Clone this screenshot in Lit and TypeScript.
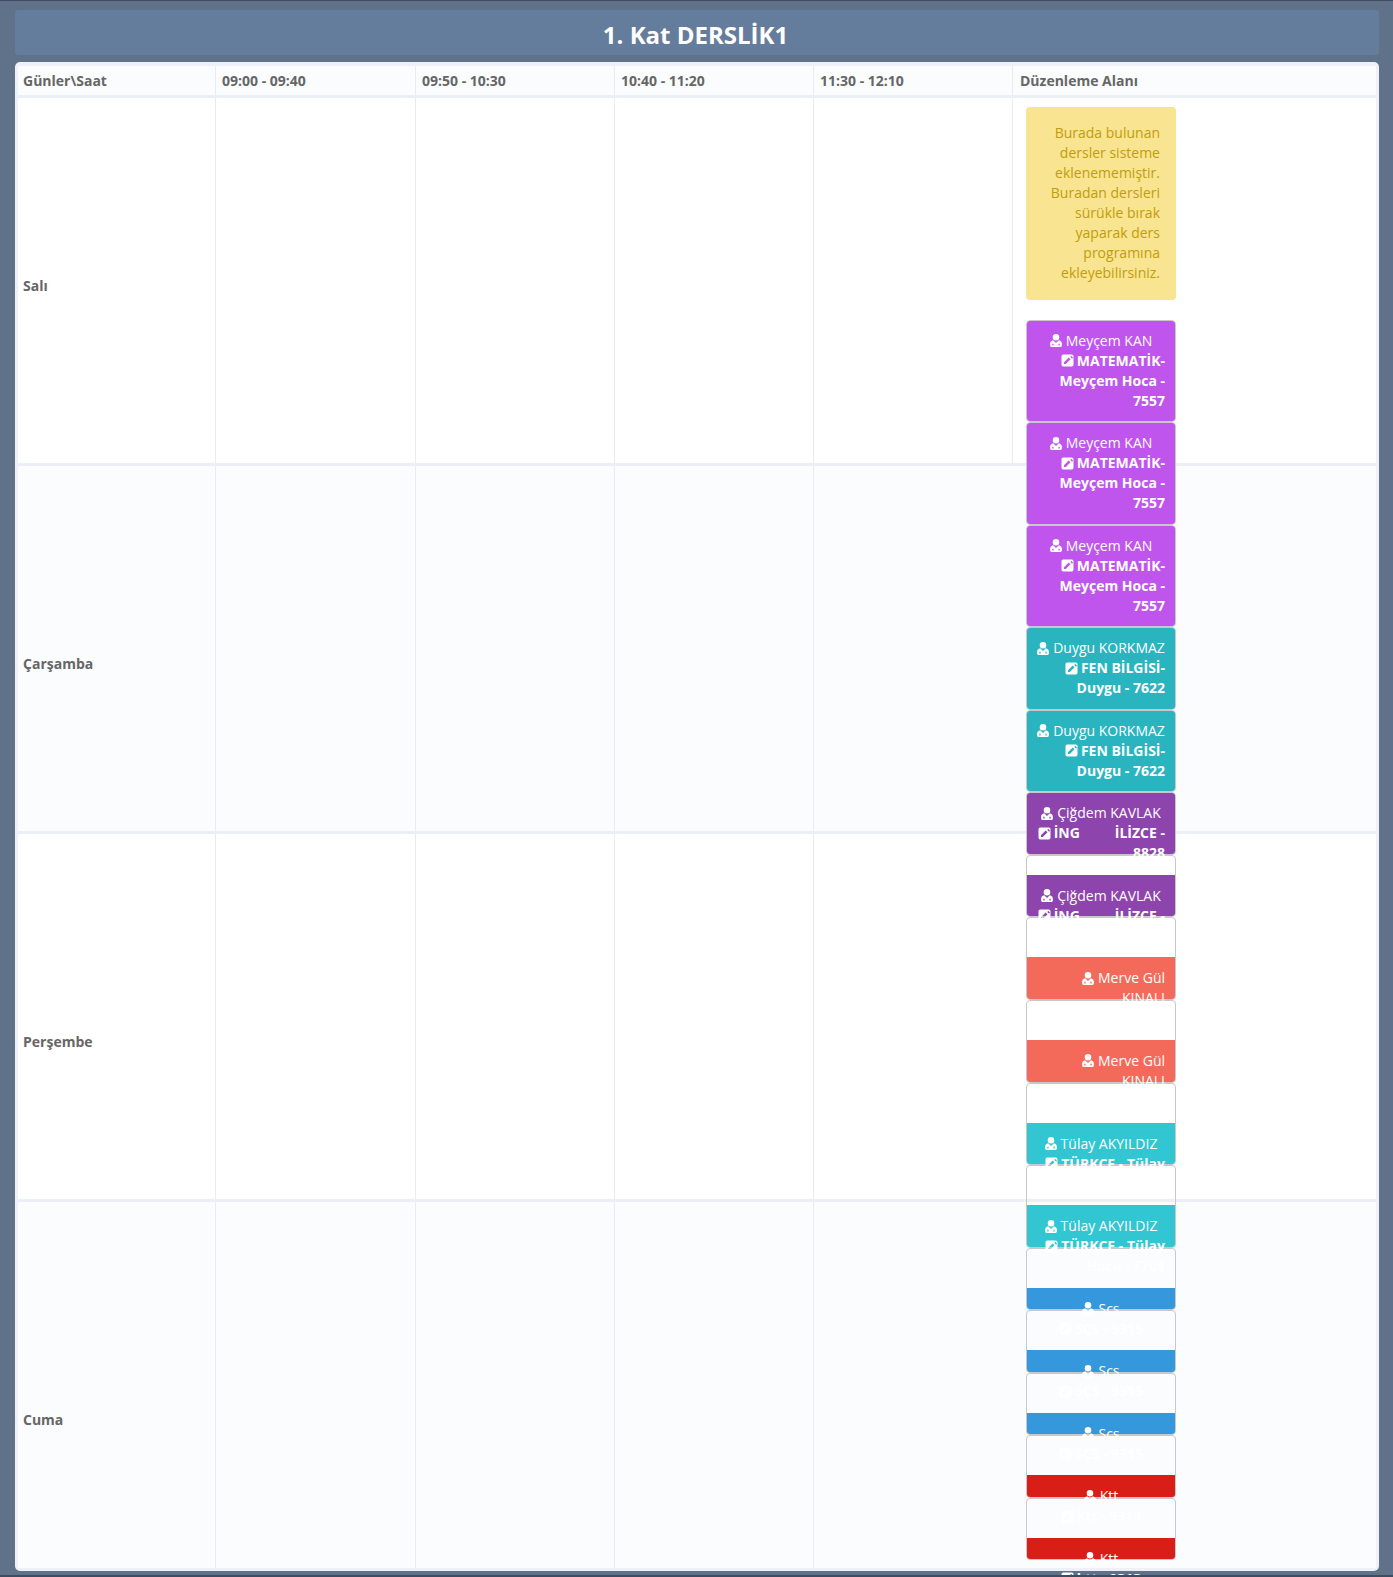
import { LitElement, html, css, svg } from "lit";
import { customElement } from "lit/decorators.js";

interface Card {
  name: string;
  code: string;
  color: string;
  height: number;
  gap: number;
  nameRight?: boolean;
  codeCenter?: boolean;
}

const MAT = { name: "Meyçem KAN", code: "MATEMATİK-Meyçem Hoca - 7557", color: "#bf55ec", height: 102.6, gap: 0 };
const FEN = { name: "Duygu KORKMAZ", code: "FEN BİLGİSİ-Duygu - 7622", color: "#2ab4c0", height: 82.4, gap: 0 };
const ING = { name: "Çiğdem KAVLAK", code: "İNG|İLİZCE - 8828", color: "#8e44ad", height: 62.5 };
const MER = { name: "Merve Gül KINALI", code: "", color: "#f36a5a", height: 82.8, gap: 39, nameRight: true };
const TUR = { name: "Tülay AKYILDIZ", code: "TÜRKÇE - Tülay Hoca - 7708", color: "#32c5d2", height: 82.5, gap: 39 };
const SCS = { name: "Scs", code: "SÇS - 9315", color: "#3598dc", height: 62.5, gap: 39, codeCenter: true };
const KTT = { name: "Ktt", code: "ktt - 9313", color: "#d91e18", height: 62.5, gap: 39, codeCenter: true };

const CARDS: Card[] = [
  MAT, MAT, MAT, FEN, FEN,
  { ...ING, gap: 0 }, { ...ING, gap: 19 },
  MER, MER, TUR, TUR, SCS, SCS, SCS, KTT, KTT,
];

const HOURS = ["09:00 - 09:40", "09:50 - 10:30", "10:40 - 11:20", "11:30 - 12:10"];
const DAYS = ["Salı", "Çarşamba", "Perşembe", "Cuma"];

const userIcon = svg`<path fill="currentColor" fill-rule="evenodd" d="M6 0a3.300 3.300 0 1 1 0 6.600A3.300 3.300 0 0 1 6 0zM3.200 6.300 6 9l2.800-2.700c1.900.3 3.100 1.700 3.100 3.500v1.700c0 .9-.7 1.500-1.600 1.500H1.700C.8 13 .1 12.400.1 11.500V9.800c0-1.800 1.200-3.200 3.100-3.500zM2.300 9.700v1.900h1.300V9.700zm6.100 0v1.900h1.300V9.700z"/>`;
const editIcon = svg`<path fill="currentColor" fill-rule="evenodd" d="M2.200.5h8.600A1.700 1.700 0 0 1 12.500 2.200v8.600a1.700 1.700 0 0 1-1.700 1.700H2.200A1.700 1.700 0 0 1 .5 10.800V2.200A1.700 1.700 0 0 1 2.200.5zM3 8.200V10h1.800l4.700-4.700-1.800-1.800zM9.300 2.900l1.800 1.800.6-.6a.6.600 0 0 0 0-.8l-1-1a.6.600 0 0 0-.8 0z"/>`;

@customElement("app-root")
export class AppRoot extends LitElement {
  static styles = css`
    :host {
      display: block;
      box-sizing: border-box;
      height: 1577px;
      overflow: hidden;
      padding: 9px 14px 0 15px;
      background: #5f7289;
      border-top: 1px solid #3f4c5f;
      border-bottom: 2px solid #3f4c5f;
      font-family: "Open Sans", "Noto Sans", sans-serif;
      font-size: 14px;
      line-height: 20px;
      color: #666;
    }
    .title {
      box-sizing: border-box;
      height: 45px;
      display: flex;
      align-items: center;
      justify-content: center;
      padding: 4px 3px 0 0;
      background: #657d9c;
      border-radius: 3px;
      color: #fff;
      font-size: 24px;
      font-weight: 700;
    }
    .table {
      margin-top: 7px;
      border: 3px solid #eef1f7;
      border-top-width: 4px;
      border-radius: 5px;
      background: #fff;
    }
    .row {
      display: grid;
      grid-template-columns: 197px 200px 199px 199px 199px 1fr;
      grid-template-rows: minmax(0, 1fr);
      box-sizing: border-box;
      height: 368px;
      border-bottom: 3px solid #eceff5;
    }
    .row.head {
      height: 32px;
      background: #fbfcfe;
      font-weight: 700;
    }
    .row.even {
      background: #fbfcfe;
    }
    .row.last {
      height: 366px;
      border-bottom: 0;
    }
    .head .cell {
      padding: 5px 6px;
    }
    .head .cell:first-child {
      padding-left: 5px;
    }
    .head .cell:last-child {
      padding-left: 7px;
    }
    .cell {
      box-sizing: border-box;
      min-width: 0;
    }
    .cell + .cell {
      border-left: 1px solid #e8ebf1;
    }
    .day {
      padding-left: 5px;
      font-weight: 700;
    }
    .row.body:not(.first) .cell:last-child {
      border-left: 0;
    }
    .edit {
      position: relative;
      z-index: 2;
      padding: 9px 0 0 13px;
    }
    .note {
      box-sizing: border-box;
      width: 150px;
      height: 193px;
      margin-bottom: 19.5px;
      padding: 16px;
      border-radius: 4px;
      background: #f9e491;
      color: #c29d0b;
      text-align: right;
    }
    .card {
      box-sizing: border-box;
      width: 150px;
      display: flex;
      flex-direction: column;
      border: 1px solid #c8c8cc;
      border-radius: 4px;
      color: #fff;
    }
    .panel {
      flex: 1;
      min-height: 0;
      padding: 10px;
      border-radius: 3px;
      text-align: right;
    }
    .panel.inset {
      padding-top: 11px;
      border-radius: 0 0 3px 3px;
    }
    .center {
      text-align: center;
    }
    .code {
      font-weight: 700;
    }
    .right {
      text-align: right;
    }
    .spread {
      display: inline-block;
      width: 35px;
    }
    svg {
      display: inline-block;
      vertical-align: -1.5px;
      margin-right: 3px;
    }
    svg.user {
      margin-right: 4px;
    }
  `;

  private renderCode(code: string) {
    const [first, rest] = code.split("|");
    return rest ? html`${first}<span class="spread"></span>${rest}` : first;
  }

  private renderCard(c: Card) {
    return html`
      <div class="card" style="height:${c.height}px;padding-top:${c.gap}px">
        <div class="panel ${c.gap ? "inset" : ""}" style="background:${c.color}">
          <div class=${c.nameRight ? "right" : "center"}>
            <svg class="user" width="12" height="13" viewBox="0 0 12 13">${userIcon}</svg>${c.name}
          </div>
          ${c.code
            ? html`<div class="code ${c.codeCenter ? "center" : "right"}">
                <svg width="13" height="13" viewBox="0 0 13 13">${editIcon}</svg>${this.renderCode(c.code)}
              </div>`
            : ""}
        </div>
      </div>
    `;
  }

  render() {
    return html`
      <div class="title">1. Kat DERSLİK1</div>
      <div class="table">
        <div class="row head">
          <div class="cell">Günler\\Saat</div>
          ${HOURS.map((h) => html`<div class="cell">${h}</div>`)}
          <div class="cell">Düzenleme Alanı</div>
        </div>
        ${DAYS.map(
          (d, i) => html`
            <div class="row body ${i % 2 ? "even" : ""} ${i === 0 ? "first" : ""} ${i === 3 ? "last" : ""}">
              <div class="cell day" style="padding-top:${178 + i * 10}px">${d}</div>
              ${HOURS.map(() => html`<div class="cell"></div>`)}
              ${i === 0
                ? html`<div class="cell edit">
                    <div class="note">
                      Burada bulunan dersler sisteme eklenememiştir. Buradan dersleri sürükle bırak yaparak ders programına ekleyebilirsiniz.
                    </div>
                    ${CARDS.map((c) => this.renderCard(c))}
                  </div>`
                : html`<div class="cell"></div>`}
            </div>
          `
        )}
      </div>
    `;
  }
}
